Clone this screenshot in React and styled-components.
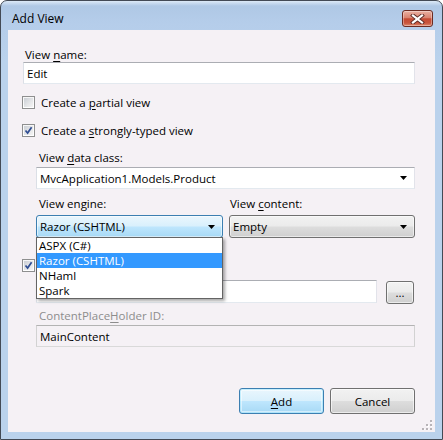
import React from "react";
import styled, { createGlobalStyle } from "styled-components";

const GlobalStyle = createGlobalStyle`
  html, body {
    margin: 0;
    padding: 0;
    background: #ffffff;
  }
  body {
    font-family: "Segoe UI", "Open Sans", "Noto Sans", sans-serif;
    font-size: 11.5px;
    color: #000;
  }
`;

const Window = styled.div`
  position: relative;
  width: 443px;
  height: 440px;
  box-sizing: border-box;
  border: 1px solid #434a55;
  border-radius: 7px 7px 0 0;
  background: linear-gradient(180deg, #dce9f7 0px, #afc8e5 5px, #b5cdea 22px, #bad2ec 60px, #bad2ec 100%);
  display: flex;
  flex-direction: column;
  overflow: hidden;
`;

const TitleBar = styled.div`
  height: 29px;
  box-sizing: border-box;
  display: flex;
  align-items: flex-start;
  justify-content: space-between;
  padding: 9px 9px 0 11px;
`;

const Title = styled.div`
  line-height: 17px;
  font-size: 12px;
  color: #000;
`;

const CloseButton = styled.div`
  width: 31px;
  height: 17px;
  box-sizing: border-box;
  border: 1px solid #6b2b22;
  border-radius: 3px;
  background: linear-gradient(180deg, #eab1a3 0%, #d98370 45%, #c44a33 52%, #c9553c 80%, #dd8a6f 100%);
  box-shadow: inset 0 0 0 1px rgba(255, 255, 255, 0.35);
  display: flex;
  align-items: center;
  justify-content: center;
`;

const Client = styled.div`
  position: relative;
  flex: 1;
  margin: 0 7px 7px 7px;
  background: #f5f1f5;
  box-sizing: border-box;
  padding: 17px 20px 18px 15px;
  display: flex;
  flex-direction: column;
`;

const Label = styled.div`
  line-height: 15px;
  height: 15px;
  padding-left: ${(p) => p.$pad ?? 3}px;
  margin-top: ${(p) => p.$mt || 0}px;
  color: ${(p) => (p.$disabled ? "#8d8d8d" : "#000")};
  white-space: nowrap;
  u {
    text-decoration: underline;
    text-underline-offset: 2px;
  }
`;

const TextBox = styled.input`
  display: block;
  box-sizing: border-box;
  width: 100%;
  height: ${(p) => p.$h || 22}px;
  margin: ${(p) => p.$mt || 0}px 0 0 0;
  padding: 0 3px;
  border: 1px solid;
  border-color: ${(p) =>
    p.$disabled ? "#b3b3b3 #d2d2d2 #d9d9d9 #d2d2d2" : "#abadb3 #e2e3ea #e3e9ef #dbdfe6"};
  background: ${(p) => (p.$disabled ? "#f5f1f5" : "#ffffff")};
  font: inherit;
  color: #000;
  outline: none;
`;

const CheckRow = styled.div`
  display: flex;
  align-items: center;
  gap: 6px;
  height: 15px;
  margin-top: ${(p) => p.$mt || 0}px;
  margin-left: -1px;
  white-space: nowrap;
  u {
    text-underline-offset: 2px;
  }
`;

const Box = styled.span`
  position: relative;
  width: 13px;
  height: 13px;
  box-sizing: border-box;
  border: 1px solid #8e8f8f;
  background: linear-gradient(180deg, #f6f6f6 0%, #ffffff 100%);
  display: flex;
  align-items: center;
  justify-content: center;
  flex-shrink: 0;
  &::before {
    content: "";
    position: absolute;
    width: 9px;
    height: 9px;
    background: linear-gradient(135deg, #cbcfd5 0%, #e6e7e9 60%, #f4f4f4 100%);
  }
  svg {
    position: relative;
  }
`;

const Indent = styled.div`
  padding-left: 13px;
  display: flex;
  flex-direction: column;
`;

const ComboBox = styled.div`
  position: relative;
  box-sizing: border-box;
  height: ${(p) => (p.$variant === "edit" ? 22 : 23)}px;
  margin-top: ${(p) => p.$mt || 0}px;
  display: flex;
  align-items: center;
  justify-content: space-between;
  padding: 0 7px 0 3px;
  white-space: nowrap;
  border: 1px solid;
  border-radius: ${(p) => (p.$variant === "edit" ? 0 : 3)}px;
  border-color: ${(p) =>
    p.$variant === "edit"
      ? "#abadb3 #e2e3ea #e3e9ef #dbdfe6"
      : p.$variant === "hot"
      ? "#3c7fb1"
      : "#707070"};
  background: ${(p) =>
    p.$variant === "edit"
      ? "#ffffff"
      : p.$variant === "hot"
      ? "linear-gradient(180deg, #eaf6fd 0%, #d9f0fc 48%, #bee6fd 52%, #a7d9f5 100%)"
      : "linear-gradient(180deg, #f2f2f2 0%, #ebebeb 48%, #dddddd 52%, #cfcfcf 100%)"};
  box-shadow: ${(p) => (p.$variant === "edit" ? "none" : "inset 0 0 0 1px rgba(255,255,255,0.55)")};
`;

const ComboText = styled.span`
  line-height: 15px;
`;

const Pair = styled.div`
  display: grid;
  grid-template-columns: 187px 1fr;
  column-gap: 6px;
  margin-top: 7px;
`;

const Column = styled.div`
  display: flex;
  flex-direction: column;
`;

const DropList = styled.div`
  position: absolute;
  top: 100%;
  left: -1px;
  width: 187px;
  box-sizing: border-box;
  border: 1px solid #646464;
  background: #ffffff;
  box-shadow: 2px 2px 3px rgba(0, 0, 0, 0.35);
  z-index: 5;
`;

const DropItem = styled.div`
  height: 15px;
  line-height: 15px;
  padding-left: 2px;
  background: ${(p) => (p.$selected ? "#3399ff" : "transparent")};
  color: ${(p) => (p.$selected ? "#ffffff" : "#000000")};
`;

const BrowseRow = styled.div`
  display: flex;
  align-items: flex-start;
  gap: 9px;
  margin-top: 7px;
  padding-right: 1px;
`;

const Button = styled.div`
  box-sizing: border-box;
  width: ${(p) => p.$w}px;
  height: ${(p) => p.$h}px;
  margin-top: ${(p) => p.$mt || 0}px;
  flex-shrink: 0;
  display: flex;
  align-items: center;
  justify-content: center;
  border: 1px solid ${(p) => (p.$default ? "#3c7fb1" : "#707070")};
  border-radius: 3px;
  background: ${(p) =>
    p.$default
      ? "linear-gradient(180deg, #eaf6fd 0%, #d9f0fc 48%, #bee6fd 52%, #a7d9f5 100%)"
      : "linear-gradient(180deg, #f2f2f2 0%, #ebebeb 48%, #dddddd 52%, #cfcfcf 100%)"};
  box-shadow: ${(p) =>
    p.$default
      ? "inset 0 0 0 1px #48d0fa44, inset 0 0 0 2px rgba(255,255,255,0.5)"
      : "inset 0 0 0 1px rgba(255,255,255,0.6)"};
  line-height: 15px;
  u {
    text-underline-offset: 2px;
  }
`;

const ButtonRow = styled.div`
  margin-top: auto;
  display: flex;
  justify-content: flex-end;
  gap: 6px;
`;

const Grip = styled.svg`
  position: absolute;
  right: 3px;
  bottom: 2px;
`;

const Arrow = () => (
  <svg width="7" height="4" viewBox="0 0 7 4">
    <path d="M0 0 H7 L3.5 4 Z" fill="#000" />
  </svg>
);

const CheckBox = ({ checked, label }) => (
  <Box role="checkbox" aria-checked={!!checked} aria-label={label}>
    {checked && (
      <svg width="9" height="9" viewBox="0 0 9 9">
        <path d="M1.5 4.5 L3.6 7 L7.6 1.2" fill="none" stroke="#2f4d93" strokeWidth="1.7" />
      </svg>
    )}
  </Box>
);

const CloseGlyph = () => (
  <svg width="15" height="10" viewBox="0 0 15 10">
    <path d="M3 1.5 L12 8.5 M12 1.5 L3 8.5" stroke="#5b2b26" strokeWidth="4" strokeLinecap="square" />
    <path d="M3 1.5 L12 8.5 M12 1.5 L3 8.5" stroke="#ffffff" strokeWidth="2.2" strokeLinecap="square" />
  </svg>
);

const engines = ["ASPX (C#)", "Razor (CSHTML)", "NHaml", "Spark"];

const gripDots = [
  [8, 0],
  [4, 4],
  [8, 4],
  [0, 8],
  [4, 8],
  [8, 8],
];

export default function App() {
  return (
    <>
      <GlobalStyle />
      <Window>
        <TitleBar>
          <Title>Add View</Title>
          <CloseButton>
            <CloseGlyph />
          </CloseButton>
        </TitleBar>
        <Client>
          <Label $pad={2}>
            View <u>n</u>ame:
          </Label>
          <TextBox readOnly defaultValue="Edit" />

          <CheckRow $mt={11}>
            <CheckBox />
            <span>
              Create a <u>p</u>artial view
            </span>
          </CheckRow>
          <CheckRow $mt={13}>
            <CheckBox checked />
            <span>
              Create a <u>s</u>trongly-typed view
            </span>
          </CheckRow>

          <Indent>
            <Label $mt={12}>
              View <u>d</u>ata class:
            </Label>
            <ComboBox $variant="edit" $mt={2}>
              <ComboText>MvcApplication1.Models.Product</ComboText>
              <Arrow />
            </ComboBox>
            <Pair>
              <Column>
                <Label>View engine:</Label>
                <ComboBox $variant="hot" $mt={4}>
                  <ComboText>Razor (CSHTML)</ComboText>
                  <Arrow />
                  <DropList>
                    {engines.map((e) => (
                      <DropItem key={e} $selected={e === "Razor (CSHTML)"}>
                        {e}
                      </DropItem>
                    ))}
                  </DropList>
                </ComboBox>
              </Column>
              <Column>
                <Label $pad={1}>
                  View <u>c</u>ontent:
                </Label>
                <ComboBox $variant="plain" $mt={4}>
                  <ComboText>Empty</ComboText>
                  <Arrow />
                </ComboBox>
              </Column>
            </Pair>
          </Indent>

          {/* label of this checkbox sits under the open drop-down */}
          <CheckRow $mt={20}>
            <CheckBox checked label="Use a layout or master page" />
          </CheckRow>

          <Indent>
            <BrowseRow>
              <TextBox readOnly defaultValue="" $h={23} />
              <Button $w={28} $h={23} $mt={1}>
                ...
              </Button>
            </BrowseRow>
            <Label $mt={4} $disabled>
              ContentPlace<u>H</u>older ID:
            </Label>
            <TextBox readOnly defaultValue="MainContent" $mt={2} $disabled />
          </Indent>

          <ButtonRow>
            <Button $w={85} $h={26} $default>
              <span>
                <u>A</u>dd
              </span>
            </Button>
            <Button $w={85} $h={26}>
              Cancel
            </Button>
          </ButtonRow>

          <Grip width="10" height="10" viewBox="0 0 10 10">
            {gripDots.map(([x, y]) => (
              <g key={`${x}-${y}`}>
                <rect x={x + 1} y={y + 1} width="2" height="2" fill="#ffffff" />
                <rect x={x} y={y} width="2" height="2" fill="#b8b4b8" />
              </g>
            ))}
          </Grip>
        </Client>
      </Window>
    </>
  );
}
